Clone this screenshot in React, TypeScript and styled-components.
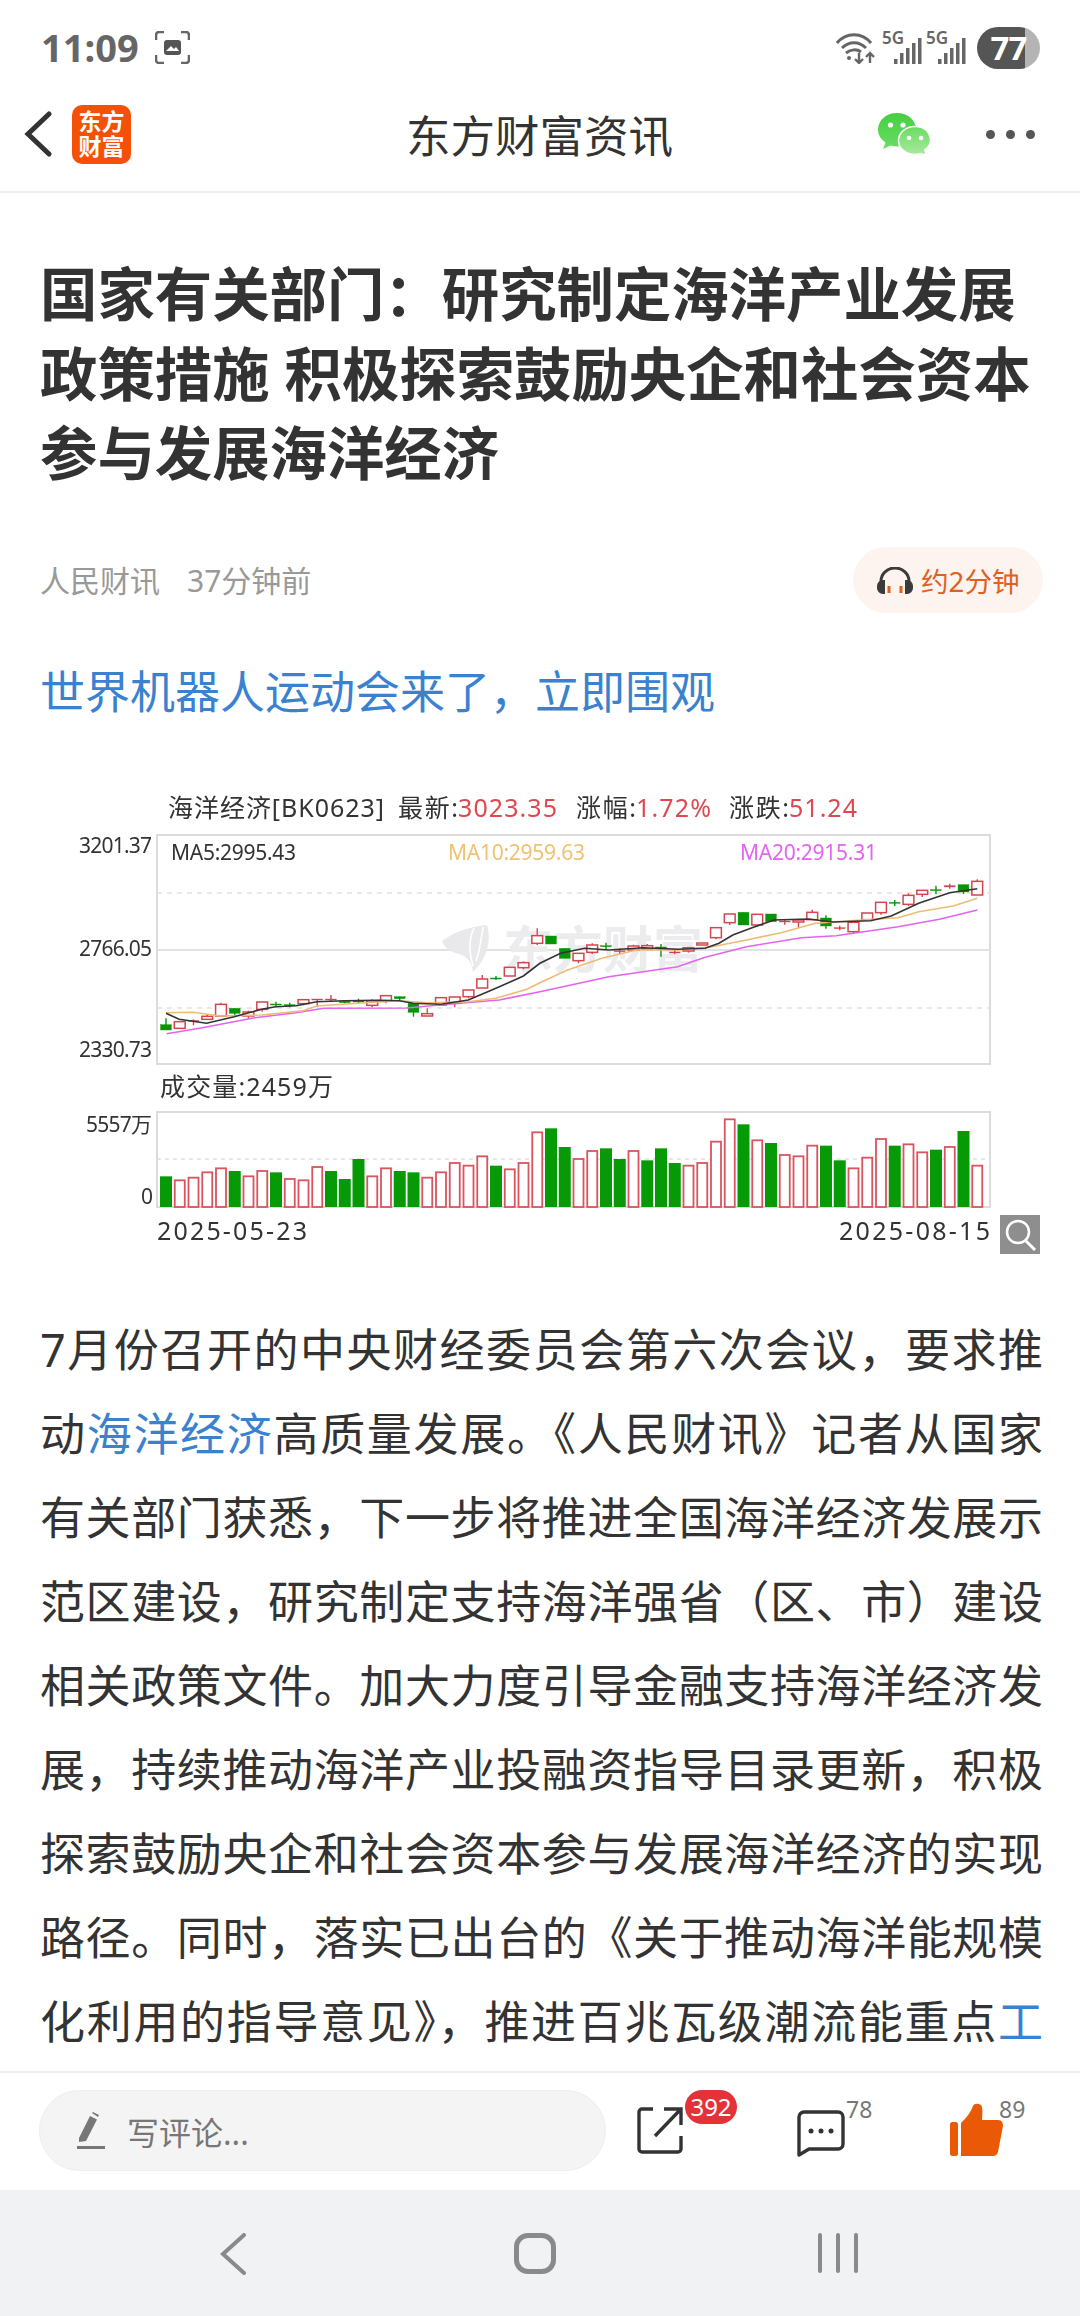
import styled, { createGlobalStyle } from 'styled-components'

const FONT = `"Noto Sans", "Noto Sans CJK SC", sans-serif`

const GlobalStyle = createGlobalStyle`
    html, body {
        margin: 0;
        padding: 0;
        background: #fff;
        font-family: ${FONT};
    }
`

// [kind, bodyTop, bodyBottom, wickTop, wickBottom], measured off the reference
type Candle = ['r' | 'g', number, number, number, number]

const CANDLES: Candle[] = [
    ['g', 764, 780, 745, 780], ['r', 755, 775, 755, 775], ['r', 751, 754, 748, 766], ['r', 739, 748, 732, 748],
    ['r', 703, 738, 698, 738], ['g', 715, 730, 715, 736], ['r', 726, 738, 722, 746], ['r', 696, 718, 696, 725],
    ['g', 702, 704, 695, 712], ['g', 704, 706, 698, 712], ['r', 689, 701, 689, 706], ['r', 687, 690, 687, 710],
    ['r', 687, 690, 675, 695], ['g', 694, 698, 690, 700], ['g', 693, 695, 686, 700], ['r', 692, 706, 688, 712],
    ['r', 677, 692, 677, 700], ['g', 680, 686, 680, 692], ['g', 700, 727, 700, 740], ['r', 731, 738, 715, 738],
    ['r', 683, 705, 683, 705], ['r', 681, 700, 681, 712], ['r', 660, 680, 660, 685], ['r', 627, 654, 615, 654],
    ['g', 624, 626, 618, 630], ['r', 592, 618, 592, 618], ['r', 578, 593, 574, 598], ['r', 497, 520, 475, 525],
    ['g', 498, 522, 498, 522], ['g', 535, 565, 535, 565], ['r', 550, 572, 550, 580], ['r', 525, 547, 520, 552],
    ['g', 527, 529, 518, 540], ['r', 542, 544, 535, 553], ['r', 528, 540, 524, 540], ['r', 527, 537, 522, 537],
    ['g', 531, 533, 522, 560], ['r', 546, 548, 540, 553], ['r', 533, 543, 533, 548], ['r', 519, 525, 519, 525],
    ['r', 473, 503, 473, 508], ['r', 432, 458, 432, 465], ['g', 427, 465, 427, 465], ['r', 433, 465, 433, 470],
    ['g', 432, 455, 432, 455], ['r', 453, 455, 447, 464], ['r', 450, 456, 450, 474], ['r', 427, 449, 419, 449],
    ['g', 444, 468, 436, 476], ['r', 473, 475, 467, 481], ['r', 457, 485, 457, 492], ['r', 429, 449, 429, 449],
    ['r', 397, 428, 397, 434], ['g', 397, 399, 390, 408], ['r', 376, 403, 370, 408], ['r', 361, 373, 361, 381],
    ['g', 359, 361, 347, 373], ['r', 347, 351, 341, 356], ['g', 344, 366, 344, 372], ['r', 334, 375, 328, 375],
]

// top edge of each volume bar, same order as the candles
const VOLUME: ['r' | 'g', number][] = [
    ['g', 289], ['r', 298], ['r', 290], ['r', 274], ['r', 262], ['g', 273], ['r', 286], ['r', 270], ['g', 277], ['r', 294],
    ['r', 298], ['r', 258], ['g', 273], ['g', 297], ['g', 237], ['r', 286], ['r', 262], ['g', 273], ['g', 277], ['r', 290],
    ['r', 274], ['r', 246], ['r', 254], ['r', 226], ['g', 257], ['r', 265], ['r', 246], ['r', 154], ['g', 145], ['g', 201],
    ['r', 234], ['r', 210], ['g', 205], ['g', 237], ['r', 210], ['g', 241], ['g', 205], ['g', 249], ['r', 254], ['r', 246],
    ['r', 182], ['r', 115], ['g', 133], ['r', 178], ['g', 189], ['r', 222], ['r', 226], ['r', 194], ['g', 197], ['g', 241],
    ['r', 262], ['r', 230], ['r', 174], ['g', 197], ['r', 190], ['r', 214], ['g', 209], ['r', 198], ['g', 153], ['r', 254],
]

const MA5 = [[482, 730], [520, 748], [600, 760], [680, 740], [760, 718], [800, 710], [860, 707], [920, 695], [1000, 692], [1100, 691], [1160, 692], [1200, 700], [1280, 703], [1360, 690], [1440, 655], [1520, 618], [1568, 580], [1628, 550], [1698, 535], [1768, 540], [1868, 533], [1968, 538], [2048, 535], [2088, 520], [2128, 495], [2188, 472], [2248, 450], [2348, 447], [2418, 456], [2528, 452], [2588, 438], [2668, 400], [2758, 368], [2838, 356]]
const MA10 = [[482, 728], [560, 727], [640, 738], [760, 735], [880, 722], [920, 708], [1040, 700], [1160, 692], [1240, 698], [1360, 695], [1440, 685], [1530, 658], [1568, 638], [1648, 600], [1748, 565], [1848, 540], [1968, 540], [2068, 530], [2168, 510], [2268, 488], [2368, 460], [2468, 452], [2608, 443], [2668, 425], [2768, 408], [2838, 385]]
const MA20 = [[484, 791], [580, 775], [740, 743], [860, 728], [940, 715], [1180, 714], [1300, 703], [1450, 690], [1568, 665], [1768, 620], [1968, 590], [2048, 562], [2168, 530], [2328, 503], [2428, 497], [2528, 482], [2608, 470], [2728, 448], [2838, 420]]

const px = (x: number) => x / 2.904
const py = (y: number) => 770 + y / 3
const linePoints = (pts: number[][]) => pts.map(([x, y]) => `${px(x).toFixed(1)},${py(y).toFixed(1)}`).join(' ')

const RED = '#d4454f'
const GREEN = '#079507'

const CandleMark = ({ candle, index }: { candle: Candle; index: number }) => {
    const [kind, top, bottom, wickTop, wickBottom] = candle
    const x = px(482 + index * 39.93)
    const color = kind === 'r' ? RED : GREEN
    const solid = kind === 'g' || bottom - top < 6
    return (
        <g>
            <line x1={x} x2={x} y1={py(wickTop)} y2={py(wickBottom)} stroke={color} strokeWidth={1.4} />
            <rect
                x={x - 5.4}
                y={py(top)}
                width={10.8}
                height={Math.max((bottom - top) / 3, 1)}
                fill={solid ? color : '#fff'}
                stroke={color}
                strokeWidth={solid ? 0.4 : 1.5}
            />
        </g>
    )
}

const Chart = () => (
    <ChartSvg viewBox="0 770 1080 500" width={1080} height={500}>
        <ChartLabel x={168} y={817} textLength={216}>海洋经济[BK0623]</ChartLabel>
        <ChartLabel x={398} y={817} textLength={60}>最新:</ChartLabel>
        <ChartLabel x={458} y={817} textLength={99} $color="#e0474f">3023.35</ChartLabel>
        <ChartLabel x={576} y={817} textLength={60}>涨幅:</ChartLabel>
        <ChartLabel x={636} y={817} textLength={75} $color="#e0474f">1.72%</ChartLabel>
        <ChartLabel x={729} y={817} textLength={60}>涨跌:</ChartLabel>
        <ChartLabel x={789} y={817} textLength={68} $color="#e0474f">51.24</ChartLabel>

        <rect x={157} y={835} width={833} height={229} fill="#fff" stroke="#dcdcdc" strokeWidth={2} />
        <line x1={157} x2={990} y1={893} y2={893} stroke="#e2e2e2" strokeWidth={1.5} strokeDasharray="5 5" />
        <line x1={157} x2={990} y1={950} y2={950} stroke="#e2e2e2" strokeWidth={2} />
        <line x1={157} x2={990} y1={1008} y2={1008} stroke="#e2e2e2" strokeWidth={1.5} strokeDasharray="5 5" />

        <path
            d="M442 941C452 934 462 928 487 925C492 942 486 960 473 972C472 963 468 957 459 954C451 952 445 949 442 941Z"
            fill="#e9e9eb"
        />
        <path d="M474 928C468 940 469 952 473 966M483 927C481 940 480 950 476 961" fill="none" stroke="#fff" strokeWidth={1.6} />
        <Watermark x={503} y={968} textLength={200}>东方财富</Watermark>

        <AxisLabel x={79} y={853} textLength={73}>3201.37</AxisLabel>
        <AxisLabel x={79} y={956} textLength={73}>2766.05</AxisLabel>
        <AxisLabel x={79} y={1057} textLength={73}>2330.73</AxisLabel>

        <AxisLabel x={171} y={860} textLength={125}>MA5:2995.43</AxisLabel>
        <AxisLabel x={448} y={860} textLength={137} $color="#efc273">MA10:2959.63</AxisLabel>
        <AxisLabel x={740} y={860} textLength={137} $color="#e264ef">MA20:2915.31</AxisLabel>

        {CANDLES.map((c, i) => (
            <CandleMark key={i} candle={c} index={i} />
        ))}
        <polyline points={linePoints(MA20)} fill="none" stroke="#e264ef" strokeWidth={1.6} />
        <polyline points={linePoints(MA10)} fill="none" stroke="#edbb74" strokeWidth={1.6} />
        <polyline points={linePoints(MA5)} fill="none" stroke="#333" strokeWidth={1.6} />

        <ChartLabel x={160} y={1096} textLength={173}>成交量:2459万</ChartLabel>
        <rect x={157} y={1112} width={833} height={95} fill="#fff" stroke="#dcdcdc" strokeWidth={2} />
        <line x1={157} x2={990} y1={1159} y2={1159} stroke="#dedede" strokeWidth={1.5} strokeDasharray="4 4" />
        {VOLUME.map(([kind, top], i) => {
            const x = 160 + i * 13.75
            const y = 1080 + top / 3
            return kind === 'g' ? (
                <rect key={i} x={x} y={y} width={12} height={1207 - y} fill="#069a06" />
            ) : (
                <rect key={i} x={x + 1} y={y + 1} width={10} height={1206 - y} fill="#fff" stroke="#d9545f" strokeWidth={1.8} />
            )
        })}
        <AxisLabel x={86} y={1132} textLength={66}>5557万</AxisLabel>
        <AxisLabel x={141} y={1204} textLength={11}>0</AxisLabel>
        <ChartLabel x={157} y={1240} textLength={150}>2025-05-23</ChartLabel>
        <ChartLabel x={839} y={1240} textLength={151}>2025-08-15</ChartLabel>

        <rect x={1000} y={1215} width={40} height={39} fill="#8e8e8e" />
        <circle cx={1018} cy={1232} r={11} fill="none" stroke="#fff" strokeWidth={2.5} />
        <line x1={1026} y1={1241} x2={1035} y2={1250} stroke="#fff" strokeWidth={3} />
    </ChartSvg>
)

export default function App() {
    return (
        <Screen>
            <GlobalStyle />
            <StatusBar>
                <StatusLeft>
                    <Clock>11:09</Clock>
                    <svg width={35} height={33} viewBox="0 0 35 33" fill="none" stroke="#666" strokeWidth={2.6}>
                        <path d="M1 9V4a3 3 0 0 1 3-3h5M26 1h5a3 3 0 0 1 3 3v5M34 24v5a3 3 0 0 1-3 3h-5M9 32H4a3 3 0 0 1-3-3v-5" />
                        <rect x={9} y={9} width={17} height={15} rx={3} fill="#555" stroke="none" />
                        <path d="M11 20l5-5 3 3 2-2 3 4z" fill="#fff" stroke="none" />
                    </svg>
                </StatusLeft>
                <StatusRight>
                    <svg width={42} height={31} viewBox="0 0 42 31" fill="none" stroke="#666">
                        <path d="M1 10C10-1 26-1 35 10" strokeWidth={3} />
                        <path d="M6 15C13 8 23 8 30 15" strokeWidth={3} />
                        <path d="M10 20C15 16 21 16 25 19" strokeWidth={3} />
                        <circle cx={13} cy={25} r={2} fill="#666" stroke="none" />
                        <path d="M23 20v10M19 26l4 4 4-4M34 30v-9M30 24l4-4 4 4" strokeWidth={2.4} />
                    </svg>
                    <SignalIcon />
                    <SignalIcon />
                    <Battery>
                        <BatteryLevel>77</BatteryLevel>
                    </Battery>
                </StatusRight>
            </StatusBar>

            <TopBar>
                <TopLeft>
                    <svg width={28} height={46} viewBox="0 0 28 46" fill="none" stroke="#333" strokeWidth={5} strokeLinecap="round">
                        <path d="M25 3L4 23l21 20" />
                    </svg>
                    <Logo>
                        <span>东方</span>
                        <span>财富</span>
                    </Logo>
                </TopLeft>
                <TopTitle>东方财富资讯</TopTitle>
                <TopRight>
                    <svg width={53} height={43} viewBox="0 0 53 43">
                        <defs>
                            <linearGradient id="wxBig" x1="0" y1="0" x2="0" y2="1">
                                <stop offset="0" stopColor="#45cf41" />
                                <stop offset="1" stopColor="#6bdc66" />
                            </linearGradient>
                            <linearGradient id="wxSmall" x1="0" y1="0" x2="0" y2="1">
                                <stop offset="0" stopColor="#6bdb62" />
                                <stop offset="1" stopColor="#a8ea9e" />
                            </linearGradient>
                        </defs>
                        <path d="M19 0C8 0 0 7.500 0 16.500c0 5.500 3 10 7.500 13L5 36l7.500-3.500c2 .6 4.300.9 6.500.9 11 0 19-7.500 19-16.900S30 0 19 0z" fill="url(#wxBig)" />
                        <path d="M37 13.500c-9.500 0-16.500 6.300-16.500 14s7 14 16.500 14c1.900 0 3.700-.3 5.400-.8l6 1.300-1.600-5.200c3.600-2.500 5.700-6 5.700-9.300 0-7.700-5-14-15.500-14z" fill="url(#wxSmall)" stroke="#fff" strokeWidth={1.5} />
                        <circle cx={12.500} cy={12} r={2.600} fill="#fff" />
                        <circle cx={25} cy={12} r={2.600} fill="#fff" />
                        <circle cx={31} cy={25} r={2.300} fill="#fff" />
                        <circle cx={43} cy={25} r={2.300} fill="#fff" />
                    </svg>
                    <MoreDots>
                        <i />
                        <i />
                        <i />
                    </MoreDots>
                </TopRight>
            </TopBar>

            <Article>
                <Title>国家有关部门：研究制定海洋产业发展政策措施 积极探索鼓励央企和社会资本参与发展海洋经济</Title>
                <MetaRow>
                    <MetaInfo>
                        <span>人民财讯</span>
                        <span>37分钟前</span>
                    </MetaInfo>
                    <ListenPill>
                        <svg width={36} height={27} viewBox="0 0 36 27" fill="none">
                            <path d="M4 18v-4a14 13 0 0 1 28 0v4" stroke="#3b3b3b" strokeWidth={3} />
                            <path d="M6 13h2v14H6a6 6 0 0 1-6-6v-2a6 6 0 0 1 6-6zM30 13h-2v14h2a6 6 0 0 0 6-6v-2a6 6 0 0 0-6-6z" fill="#3b3b3b" />
                            <path d="M12 19v7M24 19v7" stroke="#e0601f" strokeWidth={3} />
                        </svg>
                        约2分钟
                    </ListenPill>
                </MetaRow>
                <PromoLink>世界机器人运动会来了，立即围观</PromoLink>
                <Chart />
                <Body>
                    7月份召开的中央财经委员会第六次会议，要求推动<BodyLink>海洋经济</BodyLink>高质量发展。《人民财讯》记者从国家有关部门获悉，下一步将推进全国海洋经济发展示范区建设，研究制定支持海洋强省（区、市）建设相关政策文件。加大力度引导金融支持海洋经济发展，持续推动海洋产业投融资指导目录更新，积极探索鼓励央企和社会资本参与发展海洋经济的实现路径。同时，落实已出台的《关于推动海洋能规模化利用的指导意见》，推进百兆瓦级潮流能重点<BodyLink>工</BodyLink>
                </Body>
            </Article>

            <ActionBar>
                <CommentBox>
                    <svg width={29} height={38} viewBox="0 0 29 38" fill="#777">
                        <path d="M2 26L13 4l7 3.500L9 29l-7 1zM15 1l1-1 6 3-1 2z" />
                        <rect x={0} y={34} width={28} height={3} />
                    </svg>
                    写评论...
                </CommentBox>
                <ActionIcons>
                    <ActionItem $width={100} $lift={3}>
                        <svg width={46} height={47} viewBox="0 0 46 47" fill="none" stroke="#333" strokeWidth={3.400}>
                            <path d="M16 2H5a3 3 0 0 0-3 3v37a3 3 0 0 0 3 3h36a3 3 0 0 0 3-3V29" />
                            <path d="M18 29L43 3M27 2h17v16" />
                        </svg>
                        <ShareBadge>392</ShareBadge>
                    </ActionItem>
                    <ActionItem $width={93} $lift={0}>
                        <svg width={48} height={47} viewBox="0 0 48 47" fill="none">
                            <path d="M7 2h34a5 5 0 0 1 5 5v27a5 5 0 0 1-5 5H12L2 45V7a5 5 0 0 1 5-5z" stroke="#333" strokeWidth={3.400} strokeLinejoin="round" />
                            <circle cx={14} cy={21} r={2.500} fill="#333" />
                            <circle cx={24} cy={21} r={2.500} fill="#333" />
                            <circle cx={34} cy={21} r={2.500} fill="#333" />
                        </svg>
                        <Count>78</Count>
                    </ActionItem>
                    <ActionItem $width={74} $lift={1}>
                        <svg width={53} height={53} viewBox="0 0 53 53" fill="#ea5a06">
                            <rect x={0} y={19} width={8} height={34} rx={2.500} />
                            <path d="M11 53V20C17 14 21 9 23 3C24 0 31 0 32 4C33 9 32 13 32 17H48C52 17 53 20 53 23L48 49C47 52 45 53 43 53Z" />
                        </svg>
                        <Count>89</Count>
                    </ActionItem>
                </ActionIcons>
            </ActionBar>

            <NavBar>
                <svg width={26} height={42} viewBox="0 0 26 42" fill="none" stroke="#8a8a8a" strokeWidth={4} strokeLinecap="round">
                    <path d="M24 2L3 21l21 19" />
                </svg>
                <HomeButton />
                <RecentsIcon>
                    <i />
                    <i />
                    <i />
                </RecentsIcon>
            </NavBar>
        </Screen>
    )
}

const SignalIcon = () => (
    <SignalWrap>
        <SignalText>5G</SignalText>
        <svg width={28} height={26} viewBox="0 0 28 26" fill="#666">
            <rect x={0} y={21} width={3.500} height={5} />
            <rect x={6} y={15} width={3.500} height={11} />
            <rect x={12} y={10} width={3.500} height={16} />
            <rect x={18} y={5} width={3.500} height={21} />
            <rect x={24} y={0} width={3.500} height={26} />
        </svg>
    </SignalWrap>
)

const Screen = styled.div`
    width: 1080px;
    height: 2316px;
    display: flex;
    flex-direction: column;
    overflow: hidden;
    background: #fff;
`

const StatusBar = styled.div`
    height: 72px;
    padding: 24px 40px 0 41px;
    box-sizing: border-box;
    display: flex;
    align-items: center;
    justify-content: space-between;
    flex-shrink: 0;
`

const StatusLeft = styled.div`
    display: flex;
    align-items: center;
    gap: 18px;
    margin-top: -2px;
`

const Clock = styled.span`
    font-size: 38px;
    font-weight: 700;
    color: #666;
    line-height: 44px;
    width: 96px;
`

const StatusRight = styled.div`
    display: flex;
    align-items: center;
    gap: 7px;
`

const SignalWrap = styled.div`
    display: flex;
    align-items: flex-end;
    height: 32px;
    width: 37px;
    justify-content: flex-end;
    position: relative;
`

const SignalText = styled.span`
    position: absolute;
    left: -3px;
    top: -4px;
    font-size: 17px;
    line-height: 20px;
    font-weight: 600;
    color: #666;
`

const Battery = styled.div`
    width: 63px;
    height: 42px;
    border-radius: 21px;
    margin-left: 4px;
    background: linear-gradient(90deg, #555 0, #555 76%, #b4b4b4 76%, #b4b4b4 100%);
    display: flex;
    align-items: center;
    justify-content: center;
`

const BatteryLevel = styled.span`
    font-size: 33px;
    font-weight: 700;
    color: #fff;
    line-height: 42px;
    letter-spacing: -1px;
`

const TopBar = styled.header`
    height: 121px;
    padding: 5px 45px 0 24px;
    box-sizing: border-box;
    border-bottom: 2px solid #eeeeee;
    display: flex;
    align-items: center;
    justify-content: space-between;
    position: relative;
    flex-shrink: 0;
`

const TopLeft = styled.div`
    display: flex;
    align-items: center;
    gap: 20px;
`

const Logo = styled.div`
    width: 59px;
    height: 59px;
    border-radius: 10px;
    background: #f4500a;
    display: flex;
    flex-direction: column;
    align-items: center;
    justify-content: center;
    color: #fff;
    font-size: 23px;
    font-weight: 700;
    line-height: 25px;
`

const TopTitle = styled.div`
    position: absolute;
    left: 406px;
    top: 36px;
    font-size: 44.500px;
    line-height: 56px;
    color: #333;
`

const TopRight = styled.div`
    display: flex;
    align-items: center;
    gap: 55px;
`

const MoreDots = styled.div`
    display: flex;
    gap: 11px;

    i {
        display: block;
        width: 9px;
        height: 9px;
        border-radius: 50%;
        background: #555;
    }
`

const Article = styled.main`
    flex: 1;
    min-height: 0;
    overflow: hidden;
    padding-top: 62px;
`

const Title = styled.h1`
    margin: 0;
    padding: 0 30px 0 40px;
    font-size: 57.400px;
    line-height: 79.500px;
    font-weight: 700;
    color: #333;
`

const MetaRow = styled.div`
    margin-top: 53.500px;
    height: 66px;
    padding: 0 37px 0 40px;
    display: flex;
    align-items: center;
    justify-content: space-between;
`

const MetaInfo = styled.div`
    display: flex;
    gap: 27px;
    font-size: 30px;
    color: #999;
    margin-top: -3px;
`

const ListenPill = styled.div`
    width: 190px;
    height: 66px;
    box-sizing: border-box;
    padding-left: 24px;
    border-radius: 33px;
    background: #fdf4ef;
    color: #e0601f;
    font-size: 27.600px;
    display: flex;
    align-items: center;
    gap: 8px;
`

const PromoLink = styled.div`
    margin-top: 37px;
    padding-left: 40px;
    font-size: 45px;
    line-height: 84px;
    color: #3a82d0;
`

const ChartSvg = styled.svg`
    display: block;
    margin-top: 36px;
    filter: blur(0.35px);
`

const ChartLabel = styled.text.attrs({ lengthAdjust: 'spacing' })<{ $color?: string }>`
    font-size: 25px;
    fill: ${(p) => p.$color ?? '#333'};
`

const AxisLabel = styled.text.attrs({ lengthAdjust: 'spacing' })<{ $color?: string }>`
    font-size: 21px;
    fill: ${(p) => p.$color ?? '#333'};
`

const Watermark = styled.text`
    font-size: 50px;
    font-weight: 700;
    fill: #ececee;
`

const Body = styled.p`
    margin: 38px 0 0;
    padding: 0 37px 0 40px;
    font-size: 45px;
    line-height: 84px;
    color: #333;
    text-align: justify;
    text-align-last: justify;
`

const BodyLink = styled.span`
    color: #3a82d0;
`

const ActionBar = styled.footer`
    height: 119px;
    box-sizing: border-box;
    border-top: 2px solid #eeeeee;
    padding: 17px 0 0 39px;
    display: flex;
    flex-shrink: 0;
`

const CommentBox = styled.div`
    width: 567px;
    height: 81px;
    box-sizing: border-box;
    border: 1px solid #eeeeee;
    border-radius: 41px;
    background: #f4f4f5;
    padding-left: 37px;
    display: flex;
    align-items: center;
    gap: 21px;
    font-size: 32px;
    color: #777;
`

const ActionIcons = styled.div`
    margin-left: 31px;
    display: flex;
    gap: 60px;
    height: 67px;
    align-items: flex-start;
`

const ActionItem = styled.div<{ $width: number; $lift: number }>`
    position: relative;
    width: ${(p) => p.$width}px;
    height: 67px;
    box-sizing: border-box;
    padding-bottom: ${(p) => p.$lift}px;
    display: flex;
    align-items: flex-end;
`

const ShareBadge = styled.span`
    position: absolute;
    left: 48px;
    top: 0;
    width: 52px;
    height: 34px;
    border-radius: 17px;
    background: #e53238;
    color: #fff;
    font-size: 24px;
    line-height: 33px;
    text-align: center;
`

const Count = styled.span`
    position: absolute;
    left: 49px;
    top: 6px;
    font-size: 23px;
    line-height: 26px;
    color: #777;
`

const NavBar = styled.nav`
    height: 126px;
    background: #f1f2f4;
    flex-shrink: 0;
    padding: 43px 0 0 220px;
    box-sizing: border-box;
    display: flex;
    align-items: flex-start;
    gap: 262px;
`

const HomeButton = styled.div`
    width: 42px;
    height: 41px;
    margin-left: 6px;
    box-sizing: border-box;
    border: 5px solid #8a8a8a;
    border-radius: 14px;
`

const RecentsIcon = styled.div`
    display: flex;
    gap: 14px;

    i {
        display: block;
        width: 4px;
        height: 40px;
        border-radius: 2px;
        background: #8a8a8a;
    }
`
